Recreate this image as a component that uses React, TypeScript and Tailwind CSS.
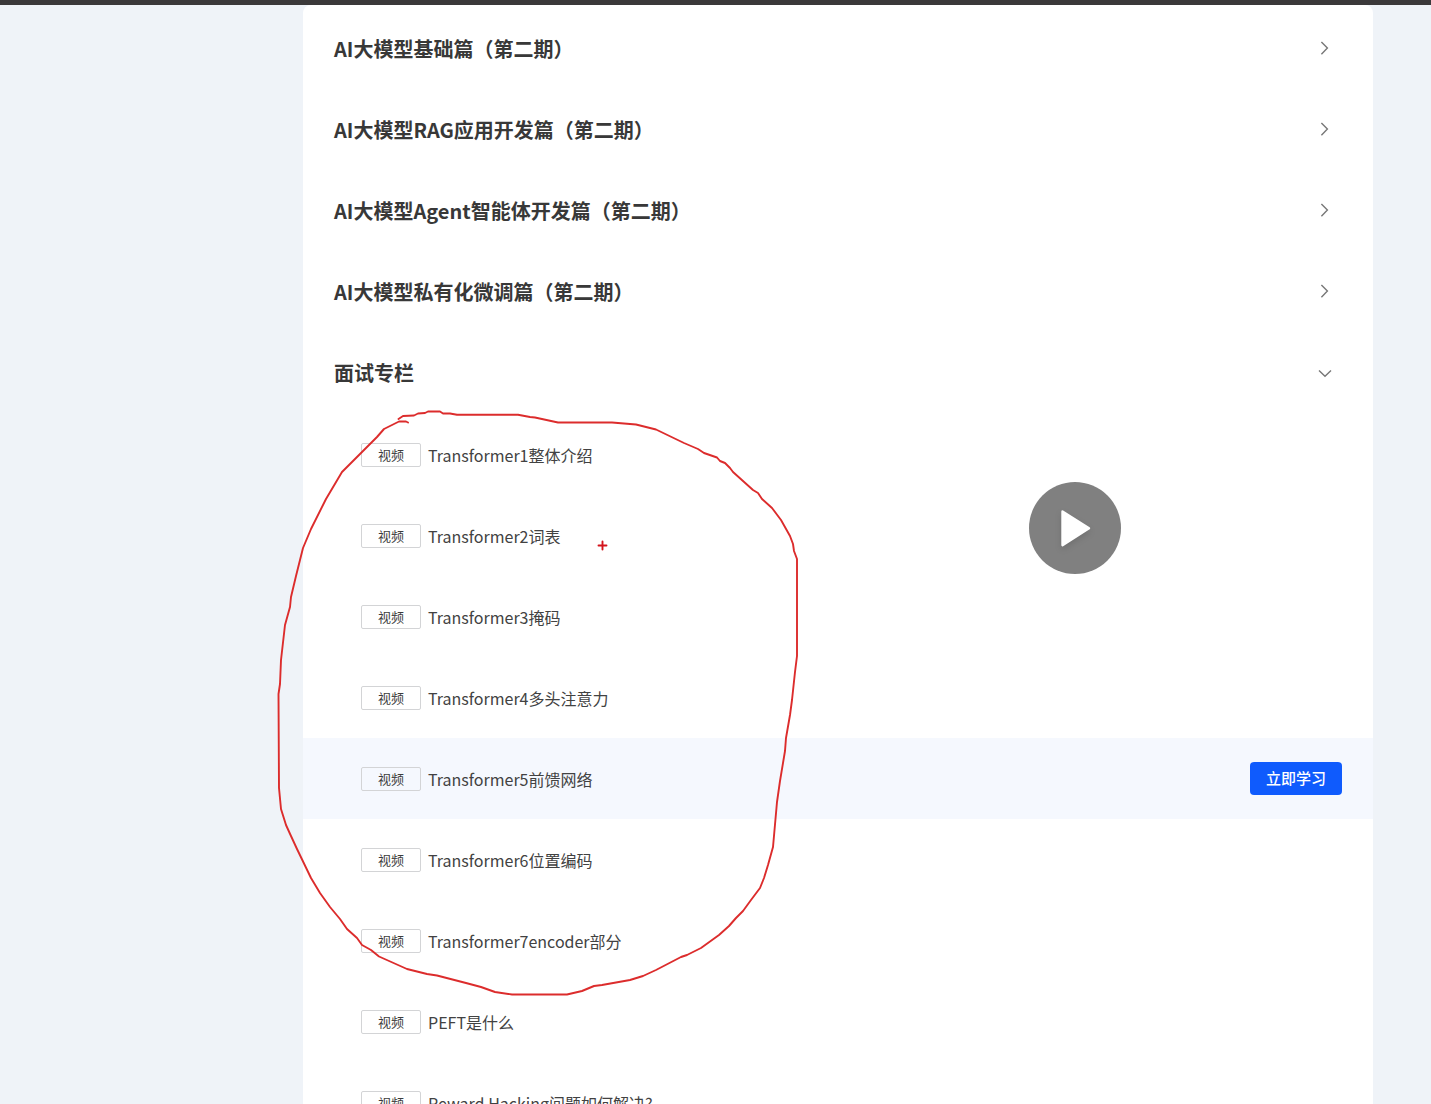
import React from "react";

const chapters = [
    "AI大模型基础篇（第二期）",
    "AI大模型RAG应用开发篇（第二期）",
    "AI大模型Agent智能体开发篇（第二期）",
    "AI大模型私有化微调篇（第二期）",
    "面试专栏",
];

const lessons = [
    "Transformer1整体介绍",
    "Transformer2词表",
    "Transformer3掩码",
    "Transformer4多头注意力",
    "Transformer5前馈网络",
    "Transformer6位置编码",
    "Transformer7encoder部分",
    "PEFT是什么",
    "Reward Hacking问题如何解决?",
];

function Chevron({ open }: { open: boolean }) {
    return (
        <svg className="w-4 h-4" viewBox="0 0 16 16" fill="none" stroke="#777777" strokeWidth="1.4">
            <path d={open ? "M2 5.5 8 11.2 14 5.5" : "M4.4 1 10.4 7.100 4.4 13.2"} />
        </svg>
    );
}

function ChapterRow({ title, open }: { title: string; open: boolean }) {
    return (
        <button type="button" aria-expanded={open} className="flex h-[81px] w-full items-center justify-between pl-[31px] pr-10 text-left">
            <span className="text-xl font-bold text-[#383838]">{title}</span>
            <Chevron open={open} />
        </button>
    );
}

function LessonRow({ title, active }: { title: string; active: boolean }) {
    return (
        <li className={active ? "flex h-[81px] items-center bg-[#f5f8fe] pl-[58px] pr-[31px]" : "flex h-[81px] items-center pl-[58px] pr-[31px]"}>
            <span className="flex h-6 w-[60px] shrink-0 items-center justify-center rounded-xs border border-[#d3d4d6] text-[13px] text-[#3c3c3c]">
                视频
            </span>
            <a href="#" className="ml-[7px] text-base text-[#424242]">{title}</a>
            {active && (
                <button type="button" className="ml-auto h-[33px] w-[92px] rounded bg-[#0f5bfd] text-[15px] font-medium text-white">
                    立即学习
                </button>
            )}
        </li>
    );
}

function PenStrokes() {
    return (
        <svg className="pointer-events-none absolute left-0 top-0" width="820" height="1010" viewBox="0 0 820 1010" fill="none" stroke="#dc2c2c" strokeWidth="1.9" strokeLinejoin="round" strokeLinecap="round">
            <path d="M398.500 419 403 416 414 415.500 418 413.500 425 413 428 411.500 440 411.500 443 413.500 450 413.500 457 414.800 518 414.800 530 417 535 417.500 558 422.500 612 422.500 636 424.500 656 429.500 684 443 698 449 704 453 717 457.500 720 461 725 463 730 468 733 472 753 490 758 493 762 499 772 508 781 520 790 536 793 544 794 551 797 559 797 656 795 672 792 700 790 715 786 738 785 751 780 781 777 802 773 847 768 865 764 878 760 888 751 900 743 911 736 918 729 926 719 935 701 948 687 955 681 957 656 970 643 976 630 980 602 985 594 986 582 991 567 994.500 512 994.500 495 992 481 987 466 983 437 975.500 427 974 407 969 379 956.500 371 950 362 945 357 938 347 929 340 919 330 907 320 893 311 878 297 849 291 836 286 825 281 809 279 788 278.500 694 280 684 281 660 285 625 290 607 291 597 296 576 303 548 311 529 326 499 342 472 362 452 377 437 384 429 392 425 399 421.500 406 421.500 408 422.500" />
            <path d="M598.500 545.500H606.500M602.500 541.500V549.500" stroke="#d4141c" />
        </svg>
    );
}

export default function App() {
    return (
        <div className="relative flex h-screen flex-col overflow-hidden bg-[#eff3f8] font-['Noto_Sans_CJK_SC',sans-serif]">
            <div className="h-[5px] shrink-0 bg-[#3b393a]" />
            <main className="ml-[303px] mr-[58px] rounded-t-lg bg-white pt-[3px]">
                {chapters.map((title, i) => (
                    <ChapterRow key={title} title={title} open={i === chapters.length - 1} />
                ))}
                <ul className="mt-px">
                    {lessons.map((title, i) => (
                        <LessonRow key={title} title={title} active={i === 4} />
                    ))}
                </ul>
            </main>
            <PenStrokes />
            <button type="button" aria-label="播放" className="absolute left-[1029px] top-[482px] h-[92px] w-[92px] rounded-full bg-[#808080]">
                <svg className="h-full w-full drop-shadow-md" viewBox="0 0 92 92">
                    <path d="M33.500 29.500 60 46.300 33.500 63.200Z" fill="#fff" stroke="#fff" strokeWidth="2.400" strokeLinejoin="round" />
                </svg>
            </button>
        </div>
    );
}
